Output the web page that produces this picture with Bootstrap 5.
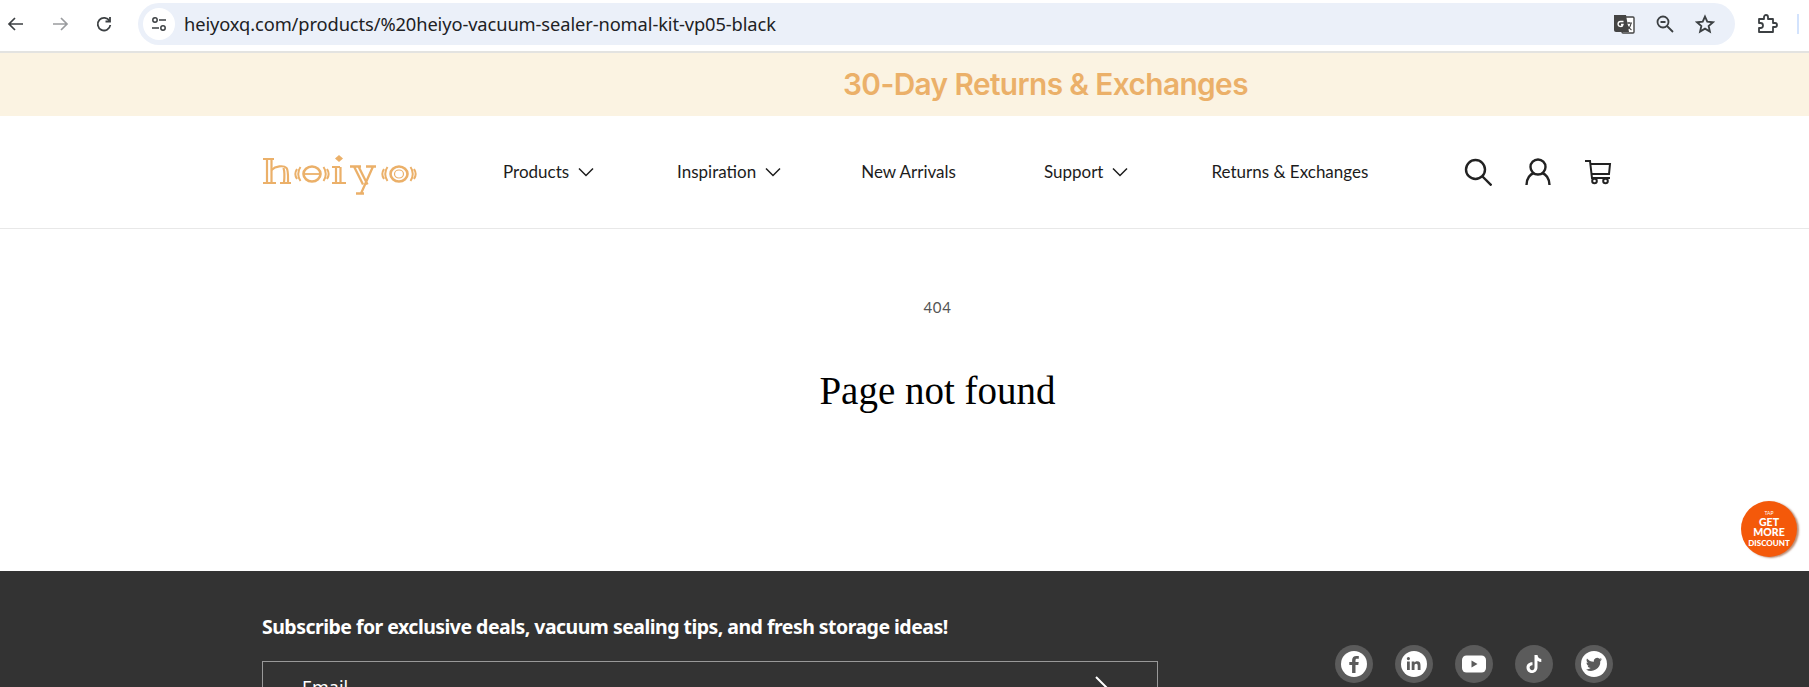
<!DOCTYPE html>
<html lang="en">
<head>
    <meta charset="UTF-8">
    <title>Page not found - heiyo</title>
    <link rel="stylesheet" href="https://cdn.jsdelivr.net/npm/bootstrap@5.3.3/dist/css/bootstrap.min.css" />
    <style>
        html, body { height: 687px; overflow: hidden; background: #fff; }
        body { font-family: "Inter", "Liberation Sans", sans-serif; position: relative; }

        .chrome-bar { height: 53px; border-bottom: 2px solid #e3e3e1; padding: 2px 0 5px 0; background: #fff; }
        .chrome-nav { width: 138px; padding-left: 6px; gap: 24px; }
        .omnibox { width: 1597px; height: 42px; background: #ebf0f9; border-radius: 21px; padding: 0 12px 0 5px; }
        .omni-site { width: 32px; height: 32px; background: #fff; border-radius: 50%; }
        .omni-url { font-family: "Noto Sans", sans-serif; font-size: 18.300px; color: #202124; margin-left: 9px; letter-spacing: -0.1px; }
        .omni-tools { gap: 21px; margin-left: auto; padding-right: 8px; }
        .chrome-ext { margin-left: 21px; }
        .chrome-sliver { width: 2px; height: 20px; background: #d3e3fd; margin-left: 19px; }

        .page-wide { width: 1875px; }
        .promo-bar { height: 63px; background: #fbf3e2; color: #ebb069; font-family: "Inter", sans-serif; font-weight: 600; font-size: 29.800px; letter-spacing: -0.6px; padding-left: 843px; }
        .shop-head { height: 113px; border-bottom: 1px solid #e8e8e8; }
        .shop-inner { width: 1351px; }
        .logo-word { width: 155px; height: 40px; margin: 5px 86px 0 0; }
        .shop-links { font-family: "Lato", sans-serif; font-size: 17px; color: #1c1c1c; }
        .shop-link { color: #1c1c1c; text-decoration: none; white-space: nowrap; }
        .shop-link svg { margin-left: 9px; }
        .ms-nav-1 { margin-left: 83px; }
        .ms-nav-2 { margin-left: 80px; }
        .ms-nav-3 { margin-left: 88px; }
        .ms-nav-4 { margin-left: 83px; }
        .shop-icons { margin-left: auto; gap: 33px; margin-right: 1px; }

        .nf-wrap { height: 342px; text-align: center; padding-top: 68px; }
        .nf-code { font-family: "Lato", sans-serif; font-size: 15px; letter-spacing: .6px; color: #555; line-height: 20px; }
        .nf-title { font-family: "Liberation Serif", serif; font-size: 39px; font-weight: 400; color: #000; margin-top: 50px; line-height: 48px; }

        .foot-dark { height: 117px; background: #333; padding-top: 41px; color: #fff; }
        .foot-title { font-family: "Noto Sans", sans-serif; font-weight: 700; font-size: 19.500px; line-height: 30px; letter-spacing: -0.53px; margin: 0; }
        .mail-box { width: 896px; height: 60px; border: 1px solid #999; margin-top: 19px; padding: 12px 0 0 39px; font-family: "Noto Sans", sans-serif; font-size: 18px; }
        .mail-arrow { margin-right: 40px; margin-top: 2px; }
        .social-row { gap: 22px; margin-top: 33px; }
        .social-dot { width: 38px; height: 38px; border-radius: 50%; background: #5b5b5b; }

        .tap-badge { position: absolute; left: 1741px; top: 501px; width: 56px; height: 56px; border-radius: 50%; background: #f4590a; color: #fff; box-shadow: 2px 1px 2px rgba(130,50,10,.55); font-family: "Lato", sans-serif; font-weight: 900; text-align: center; line-height: 1; }
        .tap-small { font-size: 5px; font-weight: 400; margin-bottom: 1px; }
        .tap-big { font-size: 10.500px; line-height: 10.500px; }
        .tap-mid { font-size: 8px; line-height: 10px; }
    </style>
</head>
<body>
    <!-- browser toolbar -->
    <div class="chrome-bar d-flex align-items-center">
        <div class="chrome-nav d-flex align-items-center flex-shrink-0">
            <svg width="20" height="20" viewBox="0 0 20 20" fill="none" stroke="#3c4043" stroke-width="1.700"><path d="M17 10H3M9 4l-6 6 6 6"/></svg>
            <svg width="20" height="20" viewBox="0 0 20 20" fill="none" stroke="#9a9c9f" stroke-width="1.700"><path d="M3 10h14M11 4l6 6-6 6"/></svg>
            <svg width="20" height="20" viewBox="0 0 20 20" fill="none" stroke="#3c4043" stroke-width="1.800"><path d="M15.500 7A6.300 6.300 0 1 0 16.300 11"/><path d="M16 3v4.500h-4.500" /></svg>
        </div>
        <div class="omnibox d-flex align-items-center flex-shrink-0">
            <div class="omni-site d-flex align-items-center justify-content-center">
                <svg width="18" height="18" viewBox="0 0 18 18" fill="none" stroke="#3c4043" stroke-width="1.500"><circle cx="5" cy="5" r="2.200"/><path d="M9 5h7M2 13h7"/><circle cx="13" cy="13" r="2.200"/></svg>
            </div>
            <span class="omni-url">heiyoxq.com/products/%20heiyo-vacuum-sealer-nomal-kit-vp05-black</span>
            <div class="omni-tools d-flex align-items-center">
                <svg width="22" height="22" viewBox="0 0 22 22"><rect x="9" y="4" width="12" height="16" rx="1" fill="#fff" stroke="#444" stroke-width="1.400"/><path d="M1 2h12l3 17H3a2 2 0 0 1-2-2z" fill="#444"/><path d="M10.500 8.500H7.500a2.500 2.500 0 1 0 2.500 3H8" fill="none" stroke="#fff" stroke-width="1.300"/><path d="M13 10h6M16 9v2M18 10.500c-.5 3-2 5-4 6M14 12c1 2 3 4 4.500 5" fill="none" stroke="#444" stroke-width="1.100"/></svg>
                <svg width="18" height="18" viewBox="0 0 18 18" fill="none" stroke="#3c4043" stroke-width="1.800"><circle cx="7" cy="7" r="5.500"/><path d="M11 11l6 6M4.500 7h5"/></svg>
                <svg width="20" height="20" viewBox="0 0 22 22" fill="none" stroke="#3c4043" stroke-width="2"><path d="M11 2.800l2.500 5.700 6.200.6-4.700 4.100 1.400 6.100-5.400-3.200-5.400 3.200 1.400-6.100-4.700-4.100 6.200-.6z"/></svg>
            </div>
        </div>
        <svg class="chrome-ext flex-shrink-0" width="22" height="22" viewBox="0 0 22 22" fill="none" stroke="#3c4043" stroke-width="1.800"><path d="M3 6h5V4a2 2 0 0 1 4 0v2h5v4h2a2 2 0 0 1 0 4h-2v5H3v-4h1.500a2.500 2.500 0 0 0 0-5H3z" stroke-linejoin="round"/></svg>
        <div class="chrome-sliver flex-shrink-0"></div>
    </div>

    <div class="page-wide">
        <div class="promo-bar d-flex align-items-center">30-Day Returns &amp; Exchanges</div>

        <header class="shop-head d-flex align-items-center">
            <div class="shop-inner mx-auto d-flex align-items-center">
                <svg class="logo-word flex-shrink-0" viewBox="0 0 155 40" fill="none" stroke="#ebb069">
                    <!-- h -->
                    <path d="M1 4h11M1 28h13M5 4v24M9.500 4v24" stroke-width="2.200"/>
                    <path d="M9.500 15c4-4 12-5 15-2 2 2 1.500 9 1.500 15M21.500 13c1 3 1 10 .5 15M18 28h11" stroke-width="2.200"/>
                    <!-- e -->
                    <ellipse cx="50" cy="19" rx="8.500" ry="7.500" stroke-width="2.600"/><path d="M42 19h16" stroke-width="1.800"/>
                    <path d="M38.500 12c-3 4-3 10 0 14M35 14c-2 3-2 7 0 10M61.500 12c3 4 3 10 0 14M65 14c2 3 2 7 0 10" stroke-width="2"/>
                    <!-- i -->
                    <path d="M77 0l4 3.500-4 3.500-4-3.500z" fill="#ebb069" stroke="none"/>
                    <path d="M70 12h8M74 12v16M78.500 12v16M70 28h14" stroke-width="2.200"/>
                    <!-- y -->
                    <path d="M88 11.500h11M104 11.500h10M92 11.500l9 18M96.500 11.500l9 18M111 11.500L99 38.500M94 38.500h8" stroke-width="2.300"/>
                    <!-- o -->
                    <ellipse cx="137" cy="19" rx="8.500" ry="7.500" stroke-width="2.600"/>
                    <ellipse cx="137" cy="19" rx="4.500" ry="4" stroke-width="1.200"/>
                    <path d="M125.500 12c-3 4-3 10 0 14M122 14c-2 3-2 7 0 10M148.500 12c3 4 3 10 0 14M152 14c2 3 2 7 0 10" stroke-width="2"/>
                </svg>
                <nav class="shop-links d-flex align-items-center">
                    <a class="shop-link d-flex align-items-center" href="#">Products<svg width="16" height="10" viewBox="0 0 16 10" fill="none" stroke="#1c1c1c" stroke-width="1.500"><path d="M1 1.500l7 7 7-7"/></svg></a>
                    <a class="shop-link d-flex align-items-center ms-nav-1" href="#">Inspiration<svg width="16" height="10" viewBox="0 0 16 10" fill="none" stroke="#1c1c1c" stroke-width="1.500"><path d="M1 1.500l7 7 7-7"/></svg></a>
                    <a class="shop-link ms-nav-2" href="#">New Arrivals</a>
                    <a class="shop-link d-flex align-items-center ms-nav-3" href="#">Support<svg width="16" height="10" viewBox="0 0 16 10" fill="none" stroke="#1c1c1c" stroke-width="1.500"><path d="M1 1.500l7 7 7-7"/></svg></a>
                    <a class="shop-link ms-nav-4" href="#">Returns &amp; Exchanges</a>
                </nav>
                <div class="shop-icons d-flex align-items-center">
                    <svg width="28" height="28" viewBox="0 0 28 28" fill="none" stroke="#222" stroke-width="2.400"><circle cx="11.500" cy="11.500" r="9.500"/><path d="M18.500 18.500l9 9"/></svg>
                    <svg width="26" height="28" viewBox="0 0 26 28" fill="none" stroke="#222" stroke-width="2.400"><circle cx="13" cy="9" r="7.500"/><path d="M1.500 27c0-7 4-11 7.500-12M24.500 27c0-7-4-11-7.500-12"/></svg>
                    <svg width="28" height="26" viewBox="0 0 28 26" fill="none" stroke="#222" stroke-width="2"><path d="M1 2h5l2 17h18M6.500 5H26l-1 10H8"/><circle cx="10.500" cy="22" r="2.300"/><circle cx="21.500" cy="22" r="2.300"/></svg>
                </div>
            </div>
        </header>

        <main class="nf-wrap">
            <div class="nf-code">404</div>
            <h1 class="nf-title">Page not found</h1>
        </main>

        <footer class="foot-dark">
            <div class="shop-inner mx-auto d-flex justify-content-between align-items-start">
                <div>
                    <p class="foot-title">Subscribe for exclusive deals, vacuum sealing tips, and fresh storage ideas!</p>
                    <div class="mail-box d-flex justify-content-between">
                        <span>Email</span>
                        <svg class="mail-arrow" width="24" height="24" viewBox="0 0 24 24" fill="none" stroke="#fff" stroke-width="2"><path d="M3 1l15 15-15 15"/></svg>
                    </div>
                </div>
                <div class="social-row d-flex">
                    <div class="social-dot d-flex align-items-center justify-content-center">
                        <svg width="26" height="26" viewBox="0 0 26 26"><circle cx="13" cy="13" r="13" fill="#fff"/><path d="M14.500 22v-8h2.800l.4-3h-3.200V9.200c0-.9.300-1.500 1.500-1.500h1.800V5c-.3 0-1.300-.1-2.500-.1-2.500 0-4.200 1.500-4.200 4.200V11H8.300v3h2.800v8z" fill="#5b5b5b"/></svg>
                    </div>
                    <div class="social-dot d-flex align-items-center justify-content-center">
                        <svg width="26" height="26" viewBox="0 0 26 26"><circle cx="13" cy="13" r="13" fill="#fff"/><path d="M6 10.500h2.800V19H6zM7.400 6a1.600 1.600 0 1 1 0 3.200 1.600 1.600 0 0 1 0-3.200zM10.700 10.500h2.700v1.200c.5-.8 1.400-1.400 2.700-1.400 2.600 0 3.400 1.600 3.400 4.100V19h-2.800v-4c0-1.200-.3-2.200-1.500-2.200s-1.700.9-1.700 2.200v4h-2.800z" fill="#5b5b5b"/></svg>
                    </div>
                    <div class="social-dot d-flex align-items-center justify-content-center">
                        <svg width="24" height="18" viewBox="0 0 24 18"><rect width="24" height="17" y=".5" rx="4.500" fill="#fff"/><path d="M9.500 5.500l6 3.500-6 3.500z" fill="#5b5b5b"/></svg>
                    </div>
                    <div class="social-dot d-flex align-items-center justify-content-center">
                        <svg width="18" height="20" viewBox="0 0 18 20"><path d="M9.500 1h3c.2 2.300 1.600 3.700 3.800 3.900v3c-1.400 0-2.700-.4-3.800-1.200v6.500c0 3.300-2.500 5.800-5.600 5.800S1.500 16.500 1.500 13.500 4 8 7.500 8.200v3.100c-1.500-.2-2.900.8-2.900 2.300 0 1.400 1.100 2.600 2.500 2.600s2.400-1.100 2.400-2.700z" fill="#fff"/></svg>
                    </div>
                    <div class="social-dot d-flex align-items-center justify-content-center">
                        <svg width="26" height="26" viewBox="0 0 26 26"><circle cx="13" cy="13" r="13" fill="#fff"/><path d="M21 8.300c-.6.300-1.200.4-1.900.5.700-.4 1.200-1 1.400-1.800-.6.400-1.300.7-2.100.8a3.300 3.300 0 0 0-5.600 3C10 10.700 7.600 9.400 6 7.400c-.9 1.500-.4 3.400 1 4.400-.5 0-1-.2-1.500-.4 0 1.600 1.100 3 2.600 3.300-.5.100-1 .1-1.500 0 .4 1.300 1.600 2.300 3.100 2.300A6.600 6.600 0 0 1 5 18.400a9.300 9.300 0 0 0 14.300-8.300c.6-.5 1.200-1.100 1.700-1.800z" fill="#5b5b5b"/></svg>
                    </div>
                </div>
            </div>
        </footer>
    </div>

    <div class="tap-badge d-flex flex-column align-items-center justify-content-center">
        <div class="tap-small">TAP</div>
        <div class="tap-big">GET</div>
        <div class="tap-big">MORE</div>
        <div class="tap-mid">DISCOUNT</div>
    </div>
    <script src="https://cdn.jsdelivr.net/npm/bootstrap@5.3.3/dist/js/bootstrap.bundle.min.js"></script>
</body>
</html>
